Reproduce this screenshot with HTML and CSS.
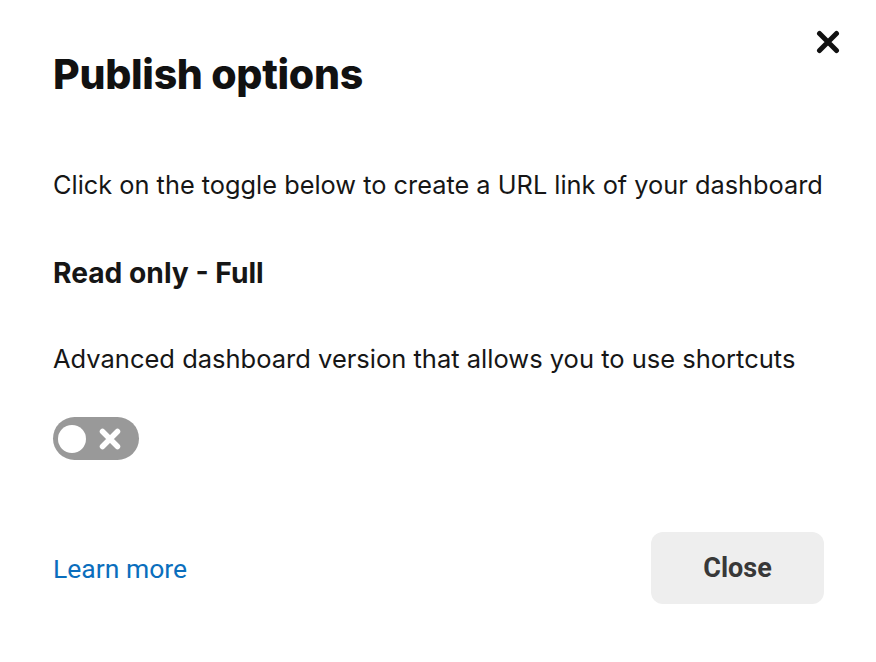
FILE: index.html
```html
<!DOCTYPE html>
<html>
<head>
<meta charset="utf-8">
<link rel="stylesheet" href="styles.css">
</head>
<body>
<div class="dialog">
  <button class="dismiss" aria-label="Close">
    <svg width="24" height="24" viewBox="0 0 24 24"><path d="M3.5 3.5 L20.5 20.5 M20.5 3.5 L3.5 20.5" stroke="#111" stroke-width="5" stroke-linecap="round"/></svg>
  </button>
  <h1 class="title">Publish options</h1>
  <p class="intro">Click on the toggle below to create a URL link of your dashboard</p>
  <h2 class="subtitle">Read only - Full</h2>
  <p class="desc">Advanced dashboard version that allows you to use shortcuts</p>
  <div class="toggle">
    <span class="knob"></span>
    <svg class="toggle-x" width="24" height="24" viewBox="0 0 24 24"><path d="M4.5 4.5 L19.5 19.5 M19.5 4.5 L4.5 19.5" stroke="#fff" stroke-width="5.5" stroke-linecap="round"/></svg>
  </div>
  <div class="footer">
    <a class="learn" href="#">Learn more</a>
    <button class="close-btn">Close</button>
  </div>
</div>
</body>
</html>
```
FILE: styles.css
```css
html, body {
  margin: 0;
  padding: 0;
  background: #fff;
}
.dialog {
  position: relative;
  width: 876px;
  height: 662px;
  box-sizing: border-box;
  padding: 50px 40px 0 53px;
  font-family: Inter, "Noto Sans", sans-serif;
  color: #161616;
}
.dismiss {
  position: absolute;
  top: 30px;
  right: 36px;
  border: 0;
  background: none;
  padding: 0;
  width: 24px;
  height: 24px;
}
.dismiss svg { display: block; }
.title {
  margin: 0;
  font-family: Inter, sans-serif;
  font-weight: 800;
  font-size: 41px;
  line-height: 48px;
  letter-spacing: -0.3px;
  color: #111;
}
.intro {
  margin: 72px 0 0;
  font-size: 25.35px;
  line-height: 30px;
}
.subtitle {
  margin: 58px 0 0;
  font-size: 28.2px;
  font-weight: 700;
  line-height: 30px;
}
.desc {
  margin: 56px 0 0;
  font-size: 25.5px;
  line-height: 30px;
}
.toggle {
  margin-top: 43px;
  width: 86px;
  height: 43px;
  border-radius: 22px;
  background: #999;
  display: flex;
  align-items: center;
  padding: 0 5px;
  box-sizing: border-box;
  gap: 12px;
}
.knob {
  width: 28px;
  height: 28px;
  border-radius: 50%;
  background: #fff;
}
.toggle-x { display: block; }
.footer {
  margin-top: 72px;
  width: 771px;
  display: flex;
  align-items: center;
  justify-content: space-between;
}
.learn {
  font-family: Roboto, sans-serif;
  font-size: 26.5px;
  color: #0a6ebd;
  text-decoration: none;
}
.close-btn {
  width: 173px;
  height: 72px;
  border: 0;
  border-radius: 12px;
  background: #eeeeee;
  font-family: Roboto, sans-serif;
  font-weight: 700;
  font-size: 27px;
  color: #383838;
}
```
